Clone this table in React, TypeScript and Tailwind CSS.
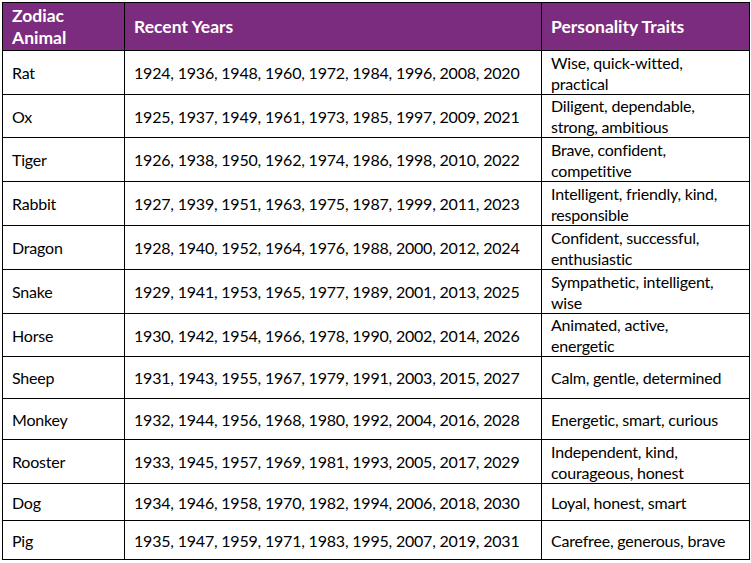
const rows: { animal: string; years: string; traits: string[]; h: string }[] = [
  { animal: "Rat", years: "1924, 1936, 1948, 1960, 1972, 1984, 1996, 2008, 2020", traits: ["Wise, quick-witted,", "practical"], h: "h-[44px]" },
  { animal: "Ox", years: "1925, 1937, 1949, 1961, 1973, 1985, 1997, 2009, 2021", traits: ["Diligent, dependable,", "strong, ambitious"], h: "h-[43px]" },
  { animal: "Tiger", years: "1926, 1938, 1950, 1962, 1974, 1986, 1998, 2010, 2022", traits: ["Brave, confident,", "competitive"], h: "h-[44px]" },
  { animal: "Rabbit", years: "1927, 1939, 1951, 1963, 1975, 1987, 1999, 2011, 2023", traits: ["Intelligent, friendly, kind,", "responsible"], h: "h-[44px]" },
  { animal: "Dragon", years: "1928, 1940, 1952, 1964, 1976, 1988, 2000, 2012, 2024", traits: ["Confident, successful,", "enthusiastic"], h: "h-[44px]" },
  { animal: "Snake", years: "1929, 1941, 1953, 1965, 1977, 1989, 2001, 2013, 2025", traits: ["Sympathetic, intelligent,", "wise"], h: "h-[44px]" },
  { animal: "Horse", years: "1930, 1942, 1954, 1966, 1978, 1990, 2002, 2014, 2026", traits: ["Animated, active,", "energetic"], h: "h-[43px]" },
  { animal: "Sheep", years: "1931, 1943, 1955, 1967, 1979, 1991, 2003, 2015, 2027", traits: ["Calm, gentle, determined"], h: "h-[42px]" },
  { animal: "Monkey", years: "1932, 1944, 1956, 1968, 1980, 1992, 2004, 2016, 2028", traits: ["Energetic, smart, curious"], h: "h-[41px]" },
  { animal: "Rooster", years: "1933, 1945, 1957, 1969, 1981, 1993, 2005, 2017, 2029", traits: ["Independent, kind,", "courageous, honest"], h: "h-[44px]" },
  { animal: "Dog", years: "1934, 1946, 1958, 1970, 1982, 1994, 2006, 2018, 2030", traits: ["Loyal, honest, smart"], h: "h-[37px]" },
  { animal: "Pig", years: "1935, 1947, 1959, 1971, 1983, 1995, 2007, 2019, 2031", traits: ["Carefree, generous, brave"], h: "h-[39px]" },
];

export default function App() {
  return (
    <div className="w-[751px] h-[563px] bg-white pt-[2px] pl-[2px] font-['Lato','Liberation_Sans',sans-serif] text-[16px] leading-[21px] tracking-[-0.2px] text-black">
      <table className="w-[747px] table-fixed border-collapse border border-black">
        <colgroup>
          <col className="w-[122px]" />
          <col className="w-[417px]" />
          <col className="w-[208px]" />
        </colgroup>
        <thead>
          <tr className="h-[48px] bg-[#7b2c7e] text-white font-bold text-[17.5px] tracking-normal">
            <th className="border border-black px-[9px] py-0 text-left align-middle leading-[22px]">
              Zodiac
              <br />
              Animal
            </th>
            <th className="border border-black px-[9px] py-0 text-left align-middle">Recent Years</th>
            <th className="border border-black px-[9px] py-0 text-left align-middle">Personality Traits</th>
          </tr>
        </thead>
        <tbody>
          {rows.map((r) => (
            <tr key={r.animal} className={r.h}>
              <td className="border border-black px-[9px] py-0 align-middle">{r.animal}</td>
              <td className="border border-black px-[9px] py-0 align-middle whitespace-nowrap">{r.years}</td>
              <td className="border border-black px-[9px] py-0 align-middle whitespace-nowrap">
                {r.traits.map((t, i) => (
                  <div key={i}>{t}</div>
                ))}
              </td>
            </tr>
          ))}
        </tbody>
      </table>
    </div>
  );
}
